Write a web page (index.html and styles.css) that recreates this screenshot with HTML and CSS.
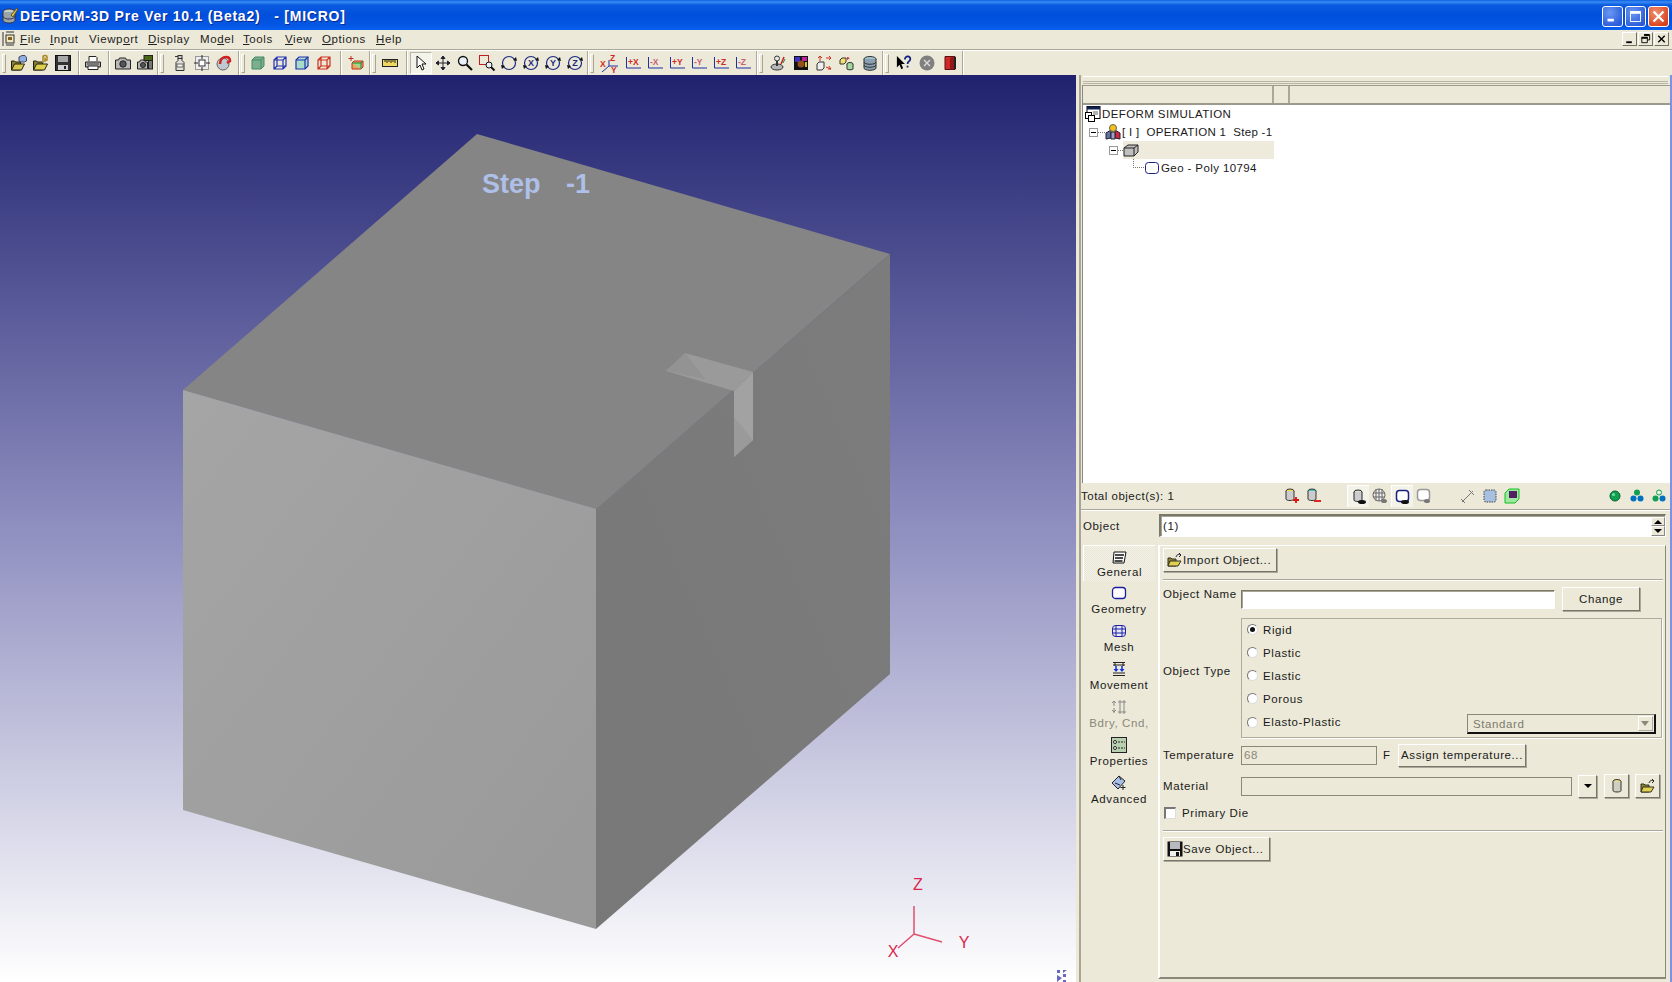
FILE: index.html
```html
<!DOCTYPE html>
<html lang="en">
<head>
<meta charset="utf-8">
<title>DEFORM-3D Pre</title>
<link rel="stylesheet" href="styles.css">
</head>
<body>
<div class="window">
  <header class="titlebar">
    <svg class="app-icon" viewBox="0 0 18 18"><ellipse cx="8" cy="5" rx="6" ry="3" fill="#c8ccc8" stroke="#334"/><path d="M2 5v8c0 2 3 3 6 3s6-1 6-3V5" fill="#9aa4a8" stroke="#334"/><path d="M2 9c0 2 3 3 6 3s6-1 6-3" fill="none" stroke="#334"/><path d="M10 8 16 1l1 1-5 8z" fill="#e8c040" stroke="#553"/></svg>
    <span class="title-text">DEFORM-3D Pre Ver 10.1 (Beta2) &nbsp; - [MICRO]</span>
    <div class="winbtns">
      <span class="winbtn"><svg viewBox="0 0 21 21"><rect x="5" y="13" width="7" height="3" fill="#fff"/></svg></span>
      <span class="winbtn"><svg viewBox="0 0 21 21"><rect x="5" y="5" width="11" height="11" fill="none" stroke="#fff"/><rect x="5" y="5" width="11" height="2.5" fill="#fff"/></svg></span>
      <span class="winbtn close"><svg viewBox="0 0 21 21"><path d="M5 5l11 11M16 5 5 16" stroke="#fff" stroke-width="2.4"/></svg></span>
    </div>
  </header>

  <nav class="menubar">
    <svg class="doc-icon" viewBox="0 0 14 16"><path d="M1 1v14" stroke="#333"/><rect x="4" y="4" width="8" height="8" fill="#f0e8c0" stroke="#333"/><rect x="6" y="6" width="4" height="3" fill="#806020"/><path d="M4 1h8M12 14H4" stroke="#333"/></svg>
    <span class="menu m-file"><u>F</u>ile</span>
    <span class="menu m-input"><u>I</u>nput</span>
    <span class="menu m-view"><span>Viewp</span><u>o</u>rt</span>
    <span class="menu m-disp"><u>D</u>isplay</span>
    <span class="menu m-model">Mo<u>d</u>el</span>
    <span class="menu m-tools"><u>T</u>ools</span>
    <span class="menu m-vw"><u>V</u>iew</span>
    <span class="menu m-opt"><u>O</u>ptions</span>
    <span class="menu m-help"><u>H</u>elp</span>
    <div class="mdibtns">
      <span class="mdibtn"><svg viewBox="0 0 13 13"><rect x="3" y="9" width="6" height="2" fill="#000"/></svg></span>
      <span class="mdibtn"><svg viewBox="0 0 13 13"><path d="M5 2.500h6v5H9M2.500 5.500h6v5h-6z" fill="none" stroke="#000"/><path d="M5 2h6M2 5h7" stroke="#000" stroke-width="2"/></svg></span>
      <span class="mdibtn"><svg viewBox="0 0 13 13"><path d="M3 3l7 7M10 3l-7 7" stroke="#000" stroke-width="1.500"/></svg></span>
    </div>
  </nav>

  <div class="toolbar">
    <div class="tgroup g1">
      <span class="grip"></span>
      <span class="tool"><svg viewBox="0 0 16 16"><path d="M0.500 15V6h3l1 1h5v8z" fill="#8a8030" stroke="#221"/><path d="M0.500 15l3-6h10l-3 6z" fill="#d8c850" stroke="#221"/><path d="M8 6V2l3-1.500h3l1.500 2V6l-2 1H10z" fill="#8cb0e0" stroke="#446"/></svg></span>
      <span class="tool"><svg viewBox="0 0 16 16"><path d="M0.500 15V6h3l1 1h5v8z" fill="#8a8030" stroke="#221"/><path d="M0.500 15l3-6h11l-3 6z" fill="#e0d050" stroke="#221"/><path d="M10 8V2c0-2 4-2 4 0v3l-2 1V2.500" fill="none" stroke="#a88820" stroke-width="1.500"/></svg></span>
      <span class="tool"><svg viewBox="0 0 16 16"><rect x="0.500" y="0.500" width="15" height="15" fill="#333" stroke="#111"/><rect x="3" y="1" width="10" height="6" fill="#a8a8a8"/><rect x="3" y="10" width="10" height="5" fill="#d0d0d0"/><rect x="9" y="11" width="2" height="3" fill="#222"/></svg></span>
    </div>
    <div class="tgroup g2">
      <span class="tool"><svg viewBox="0 0 16 16"><path d="M4 6V1.500h7l1 1V6" fill="#fff" stroke="#222"/><path d="M0.500 7h15v5H0.500z" fill="#b0b0b0" stroke="#222"/><path d="M3 11h10v3.500H3z" fill="#fff" stroke="#222"/><path d="M2 9h12" stroke="#444"/></svg></span>
    </div>
    <div class="tgroup g3">
      <span class="tool"><svg viewBox="0 0 16 16"><path d="M0.500 5h3l1-2h6l1 2h4v9H0.500z" fill="#b8b8b8" stroke="#222"/><circle cx="8" cy="9" r="3.200" fill="#555" stroke="#222"/></svg></span>
      <span class="tool"><svg viewBox="0 0 16 16"><path d="M0.500 7h2l1-2h4l1 2h2v7H0.500z" fill="#b8b8b8" stroke="#222"/><circle cx="6" cy="10" r="2.500" fill="#555" stroke="#222"/><rect x="7" y="0.500" width="8.500" height="5" fill="#486818" stroke="#222"/><rect x="11.500" y="5.500" width="4" height="8.500" fill="#777" stroke="#222"/></svg></span>
    </div>
    <div class="tgroup g4">
      <span class="grip m3"></span>
      <span class="tool"><svg viewBox="0 0 16 16"><rect x="6" y="0.500" width="4" height="3" fill="#ccc" stroke="#333"/><path d="M3 1.500h3M6 3.500h4v2l2 2v8H4v-8l2-2z" fill="#e0e0d8" stroke="#333"/><rect x="5" y="9" width="6" height="3" fill="#f8f8f0" stroke="#666"/></svg></span>
      <span class="tool"><svg viewBox="0 0 16 16"><rect x="1.500" y="1.500" width="13" height="13" fill="#eee" stroke="#999"/><rect x="5" y="5" width="6" height="6" fill="#fff" stroke="#333"/><path d="M8 0v4M8 12v4M0 8h4M12 8h4" stroke="#222"/></svg></span>
      <span class="tool"><svg viewBox="0 0 16 16"><circle cx="7" cy="9" r="6" fill="#c0c8d0" stroke="#666"/><path d="M4 9c0-5 3-7 6-7s4 2 4 4l-3 2" fill="none" stroke="#d02020" stroke-width="2.500"/></svg></span>
    </div>
    <div class="tgroup g5">
      <span class="grip"></span>
      <span class="tool"><svg viewBox="0 0 16 16"><path d="M2 5l3-3h9v9l-3 3H2z" fill="#7cb08c" stroke="#486"/><path d="M2 5h9v9M11 5l3-3" fill="none" stroke="#486"/></svg></span>
      <span class="tool"><svg viewBox="0 0 16 16"><path d="M2 5l3-3h9v9l-3 3H2zM2 5h9v9M11 5l3-3M5 2v9h9M5 11l-3 3" fill="none" stroke="#2030b0" stroke-width="1.200"/></svg></span>
      <span class="tool"><svg viewBox="0 0 16 16"><path d="M2 5l3-3h9v9l-3 3H2z" fill="#a8dcc8" stroke="#2030b0" stroke-width="1.200"/><path d="M2 5h9v9M11 5l3-3" fill="none" stroke="#2030b0" stroke-width="1.200"/></svg></span>
      <span class="tool"><svg viewBox="0 0 16 16"><path d="M2 5l3-3h9v9l-3 3H2zM2 5h9v9M11 5l3-3M5 2v9h9M5 11l-3 3" fill="none" stroke="#d03020" stroke-width="1.200"/></svg></span>
    </div>
    <div class="tgroup g6">
      <span class="tool"><svg viewBox="0 0 16 16"><path d="M4 8l2-2h9v6l-2 2H4z" fill="#e8a860" stroke="#c03020"/><path d="M4 8h9v6M13 8l2-2" fill="#a0d890" stroke="#208030"/><path d="M3 1v5M0.500 3.500h5" stroke="#c03020"/></svg></span>
    </div>
    <div class="tgroup g7">
      <span class="grip m1"></span>
      <span class="tool"><svg viewBox="0 0 16 16"><rect x="0.500" y="4.500" width="15" height="7" fill="#f0d860" stroke="#222"/><path d="M3 5v2M5 5v3M7 5v2M9 5v3M11 5v2M13 5v3" stroke="#222"/></svg></span>
    </div>
    <div class="tgroup g8">
      <span class="tool pressed"><svg viewBox="0 0 16 16"><path d="M4 1v12l3-3 2 5 2-1-2-5h4z" fill="#fff" stroke="#111"/></svg></span>
      <span class="tool"><svg viewBox="0 0 16 16"><path d="M8 1v14M1 8h14M8 1 6 3.500h4zM8 15l-2-2.500h4zM1 8l2.500-2v4zM15 8l-2.500-2v4z" fill="#223" stroke="#223"/></svg></span>
      <span class="tool"><svg viewBox="0 0 16 16"><circle cx="6" cy="6" r="4.500" fill="#e8f0f8" stroke="#111" stroke-width="1.300"/><path d="M9.500 9.500 15 15" stroke="#111" stroke-width="2.200"/></svg></span>
      <span class="tool"><svg viewBox="0 0 16 16"><rect x="0.500" y="0.500" width="9" height="9" fill="none" stroke="#c02020"/><circle cx="10" cy="10" r="3" fill="#e8f0f8" stroke="#111"/><path d="M12 12l3.500 3.500" stroke="#111" stroke-width="2"/></svg></span>
      <span class="tool"><svg viewBox="0 0 16 16"><circle cx="8" cy="8" r="6.500" fill="none" stroke="#1a2a80" stroke-width="1.200"/><path d="M16 6l-4-1 3-3zM0 10l4 1-3 3z" fill="#111"/></svg></span>
      <span class="tool"><svg viewBox="0 0 16 16"><circle cx="8" cy="8" r="6.500" fill="none" stroke="#1a2a80" stroke-width="1.200"/><path d="M16 6l-4-1 3-3zM0 10l4 1-3 3z" fill="#111"/><text class="rot" x="8" y="11" text-anchor="middle">X</text></svg></span>
      <span class="tool"><svg viewBox="0 0 16 16"><circle cx="8" cy="8" r="6.500" fill="none" stroke="#1a2a80" stroke-width="1.200"/><path d="M16 6l-4-1 3-3zM0 10l4 1-3 3z" fill="#111"/><text class="rot" x="8" y="11" text-anchor="middle">Y</text></svg></span>
      <span class="tool"><svg viewBox="0 0 16 16"><circle cx="8" cy="8" r="6.500" fill="none" stroke="#1a2a80" stroke-width="1.200"/><path d="M16 6l-4-1 3-3zM0 10l4 1-3 3z" fill="#111"/><text class="rot" x="8" y="11" text-anchor="middle">Z</text></svg></span>
    </div>
    <div class="tgroup g9">
      <span class="grip m1"></span>
      <span class="tool xyz"><svg viewBox="0 0 20 20"><path d="M9 7v6M9 13 2 19M9 13h9" stroke="#2030a0" fill="none"/><text class="ax red" x="10" y="8">Z</text><text class="ax red" x="0" y="14">X</text><text class="ax red" x="11" y="20">Y</text></svg></span>
      <span class="tool dir"><svg viewBox="0 0 16 16"><path d="M1.500 2v11H16" stroke="#2030a0" fill="none"/><text class="ax red" x="3" y="10">+X</text></svg></span>
      <span class="tool dir"><svg viewBox="0 0 16 16"><path d="M1.500 2v11H16" stroke="#2030a0" fill="none"/><text class="ax pale" x="3" y="10">-X</text></svg></span>
      <span class="tool dir"><svg viewBox="0 0 16 16"><path d="M1.500 2v11H16" stroke="#2030a0" fill="none"/><text class="ax red" x="3" y="10">+Y</text></svg></span>
      <span class="tool dir"><svg viewBox="0 0 16 16"><path d="M1.500 2v11H16" stroke="#2030a0" fill="none"/><text class="ax pale" x="3" y="10">-Y</text></svg></span>
      <span class="tool dir"><svg viewBox="0 0 16 16"><path d="M1.500 2v11H16" stroke="#2030a0" fill="none"/><text class="ax red" x="3" y="10">+Z</text></svg></span>
      <span class="tool dir"><svg viewBox="0 0 16 16"><path d="M1.500 2v11H16" stroke="#2030a0" fill="none"/><text class="ax pale" x="3" y="10">-Z</text></svg></span>
    </div>
    <div class="tgroup g10">
      <span class="grip m1"></span>
      <span class="tool w23"><svg viewBox="0 0 16 16"><ellipse cx="7" cy="12" rx="6" ry="3" fill="#b8b8b8" stroke="#333"/><path d="M7 11V5" stroke="#333" stroke-width="2"/><circle cx="7" cy="3.500" r="2.500" fill="#e8e8e8" stroke="#333"/><path d="M11 9l3-7" stroke="#c02020" stroke-width="1.500"/><path d="M13 8l2-4" stroke="#208030"/></svg></span>
      <span class="tool w23"><svg viewBox="0 0 16 16"><rect x="1" y="1" width="14" height="14" fill="#111"/><rect x="2" y="2" width="5" height="5" fill="#4030c0"/><rect x="9" y="2" width="5" height="4" fill="#c020a0"/><circle cx="8" cy="9" r="3.500" fill="#905020"/><rect x="12" y="7" width="2" height="5" fill="#d8c020"/></svg></span>
      <span class="tool w23"><svg viewBox="0 0 16 16"><path d="M1 9l2-2h5v6l-2 2H1z" fill="#eee" stroke="#333"/><path d="M4 6V1M2 3l2-2 2 2M10 3h5M13 1l2 2-2 2M10 12l5 2M13 11l2 3h-3" stroke="#d03020" fill="none"/></svg></span>
      <span class="tool w23"><svg viewBox="0 0 16 16"><path d="M1 5l2-2h4v4L5 9H1z" fill="#f0e070" stroke="#333"/><ellipse cx="11" cy="9" rx="3" ry="1.500" fill="#a0d8a0" stroke="#333"/><path d="M8 9v5c0 1 6 1 6 0V9" fill="#a0d8a0" stroke="#333"/><path d="M8 2l3 1-3 2" fill="#d03020"/></svg></span>
      <span class="tool w23"><svg viewBox="0 0 16 16"><ellipse cx="8" cy="4" rx="6" ry="2.500" fill="#a0c0d0" stroke="#333"/><path d="M2 4v9c0 3 12 3 12 0V4" fill="#88a0b0" stroke="#333"/><path d="M2 7c0 3 12 3 12 0M2 10c0 3 12 3 12 0" fill="none" stroke="#333"/></svg></span>
    </div>
    <div class="tgroup g11">
      <span class="grip m1"></span>
      <span class="tool w23"><svg viewBox="0 0 18 18"><path d="M1 1v13l3-3 2 5 2-1-2-5h4z" fill="#000"/><path d="M10 5c0-5 7-4 6 0 0 2-3 2-3 5M13 12v2" fill="none" stroke="#102080" stroke-width="2"/></svg></span>
      <span class="tool w23"><svg viewBox="0 0 16 16"><circle cx="8" cy="8" r="7.500" fill="#808080"/><path d="M5 5l6 6M11 5l-6 6" stroke="#ddd" stroke-width="1.300"/></svg></span>
      <span class="tool w23"><svg viewBox="0 0 16 16"><path d="M3 1.500h10v13H3z" fill="#d02828" stroke="#511"/><path d="M8 3l4-1.500v13H8" fill="#901818"/><path d="M13 2v12" stroke="#222" stroke-width="2"/></svg></span>
    </div>
  </div>

  <main class="workspace">
    <div class="viewport">
      <svg class="scene" viewBox="0 75 1076 907" xmlns="http://www.w3.org/2000/svg">
        <defs>
          <linearGradient id="bg" x1="0" y1="0" x2="0" y2="1">
            <stop offset="0" stop-color="#20226f"/>
            <stop offset="0.5" stop-color="#8f8fc0"/>
            <stop offset="1" stop-color="#ffffff"/>
          </linearGradient>
          <linearGradient id="lf" x1="0" y1="0" x2="1" y2="1">
            <stop offset="0" stop-color="#a5a5a5"/>
            <stop offset="1" stop-color="#999999"/>
          </linearGradient>
          <linearGradient id="rf" x1="0" y1="1" x2="1" y2="0">
            <stop offset="0" stop-color="#787878"/>
            <stop offset="1" stop-color="#7c7c7c"/>
          </linearGradient>
        </defs>
        <rect x="0" y="75" width="1076" height="907" fill="url(#bg)"/>
        <polygon points="477,134 890,254 596,509 183,390" fill="#858585"/>
        <polygon points="183,390 596,509 596,929 183,810" fill="url(#lf)"/>
        <polygon points="596,509 890,254 890,674 596,929" fill="url(#rf)"/>
        <polygon points="685,353 753,372 734,391 666,371" fill="#9a9a9a"/>
        <polygon points="685,353 705,379 666,371" fill="#939393"/>
        <polygon points="734,391 753,372 753,440 734,457" fill="#a2a2a2"/>
        <polygon points="734,417 753,440 734,457" fill="#9a9a9a"/>
        <text class="step" x="482" y="193">Step</text>
        <text class="step" x="566" y="193">-1</text>
        <g class="axes">
          <path d="M914 906V934M914 934 942 942M914 934 898 948"/>
        </g>
        <text class="axis" x="918" y="890" text-anchor="middle">Z</text>
        <text class="axis" x="964" y="948" text-anchor="middle">Y</text>
        <text class="axis" x="893" y="957" text-anchor="middle">X</text>
        <path d="M1057 970h3v3h-3zM1063 970h4l-4 3zM1057 975l5 3-5 4zM1063 974h3v3h-3zM1063 980h3v2h-3z" fill="#6868c0"/>
      </svg>
    </div>

    <aside class="side">
      <div class="sash-grip"></div>
      <div class="tree">
        <div class="tree-head">
          <span class="th th1"></span><span class="th th2"></span><span class="th th3"></span>
        </div>
        <div class="tree-body">
          <div class="row r1">
            <svg class="ticon" viewBox="0 0 16 16"><rect x="2" y="0.500" width="13" height="12" fill="#fff" stroke="#000"/><rect x="2" y="0.500" width="13" height="3" fill="#102050"/><rect x="0.500" y="6.500" width="6" height="6" fill="#fff" stroke="#000"/><rect x="3.500" y="9.500" width="6" height="6" fill="#fff" stroke="#000"/><path d="M8 6h5M8 8h5" stroke="#666"/></svg>
            <span class="tlabel">DEFORM SIMULATION</span>
          </div>
          <div class="row r2">
            <span class="exp"></span><span class="dot-h"></span>
            <svg class="ticon" viewBox="0 0 16 16"><path d="M1 9l5-3v8l-5 1z" fill="#6070a0" stroke="#223"/><path d="M15 9l-5-3v8l5 1z" fill="#d02840" stroke="#223"/><path d="M6 8h4v7H6z" fill="#a0a0c0" stroke="#223"/><circle cx="8" cy="4" r="3.500" fill="#f0c020" stroke="#664"/></svg>
            <span class="tlabel op">[ I ] &nbsp;OPERATION 1 &nbsp;Step -1</span>
          </div>
          <div class="row r3">
            <span class="exp"></span><span class="dot-h short"></span>
            <span class="sel">
              <svg class="ticon" viewBox="0 0 16 16"><path d="M1 6l4-3h10v7l-4 4H1z" fill="#c0c0c0" stroke="#222"/><path d="M1 6h10v8M11 6l4-3" fill="none" stroke="#222"/></svg>
            </span>
          </div>
          <div class="row r4">
            <span class="elbow"></span>
            <svg class="ticon" viewBox="0 0 16 16"><rect x="1.500" y="2.500" width="13" height="11" rx="3" fill="#fff" stroke="#1a2080"/></svg>
            <span class="tlabel">Geo - Poly 10794</span>
          </div>
        </div>
      </div>

      <div class="status">
        <span class="total">Total object(s): 1</span>
        <div class="sgroup s1">
          <span class="sicon"><svg viewBox="0 0 16 16"><ellipse cx="7" cy="3" rx="4" ry="2" fill="#f0e050" stroke="#333"/><path d="M3 3v8c0 2 8 2 8 0V3" fill="#ccc" stroke="#333"/><path d="M10 12h6M13 9v6" stroke="#e01010" stroke-width="1.800"/></svg></span>
          <span class="sicon"><svg viewBox="0 0 16 16"><ellipse cx="7" cy="3" rx="4" ry="2" fill="#40c8c8" stroke="#333"/><path d="M3 3v8c0 2 8 2 8 0V3" fill="#ccc" stroke="#333"/><path d="M9 13h7" stroke="#e01010" stroke-width="1.800"/></svg></span>
        </div>
        <div class="sgroup s2">
          <span class="sicon on"><svg viewBox="0 0 16 16"><ellipse cx="7" cy="3" rx="4" ry="2" fill="#ddd" stroke="#222"/><path d="M3 3v8c0 2 8 2 8 0V3" fill="#ccc" stroke="#222"/><ellipse cx="11" cy="13" rx="4" ry="2" fill="#111"/></svg></span>
          <span class="sicon"><svg viewBox="0 0 16 16"><circle cx="7" cy="7" r="6" fill="#eee" stroke="#666"/><path d="M1 5h12M1 9h12M4 1v12M7 1v12M10 1v12" stroke="#666"/><ellipse cx="12" cy="13" rx="3" ry="2" fill="#777"/></svg></span>
          <span class="sicon on"><svg viewBox="0 0 16 16"><rect x="1.500" y="1.500" width="12" height="11" rx="3" fill="#fff" stroke="#1a2080" stroke-width="1.500"/><ellipse cx="10" cy="13" rx="4" ry="2" fill="#111"/></svg></span>
          <span class="sicon"><svg viewBox="0 0 16 16"><rect x="1.500" y="1.500" width="12" height="11" rx="3" fill="#fff" stroke="#999" stroke-width="1.500"/><ellipse cx="11" cy="13" rx="3" ry="2" fill="#777"/></svg></span>
        </div>
        <div class="sgroup s3">
          <span class="sicon"><svg viewBox="0 0 16 16"><path d="M2 14 13 3M9 2l5 5M1 11l4 4" stroke="#777" fill="none"/></svg></span>
          <span class="sicon"><svg viewBox="0 0 16 16"><rect x="2" y="2" width="12" height="12" rx="2" fill="#a8c0e0" stroke="#444" stroke-dasharray="1.500 1"/></svg></span>
          <span class="sicon"><svg viewBox="0 0 16 16"><path d="M1 5l4-4h10v10l-4 4H1z" fill="#a0e8a0" stroke="#10c020"/><rect x="5" y="3" width="8" height="7" fill="#502060"/></svg></span>
        </div>
        <div class="sgroup s4">
          <span class="sicon"><svg viewBox="0 0 16 16"><circle cx="8" cy="8" r="5" fill="#10a050" stroke="#086030"/><circle cx="6.500" cy="6.500" r="1.500" fill="#70e0a0"/></svg></span>
          <span class="sicon"><svg viewBox="0 0 16 16"><circle cx="8" cy="4.500" r="3" fill="#10a050"/><circle cx="4.500" cy="10.500" r="3" fill="#0070c0"/><circle cx="11.500" cy="10.500" r="3" fill="#0070c0"/></svg></span>
          <span class="sicon"><svg viewBox="0 0 16 16"><circle cx="8" cy="4.500" r="2.500" fill="#e8f0e8" stroke="#10a050"/><circle cx="4.500" cy="10.500" r="3" fill="#10a050"/><circle cx="11.500" cy="10.500" r="3" fill="#0070c0"/></svg></span>
        </div>
      </div>

      <div class="objrow">
        <span class="objlabel">Object</span>
        <div class="objfield sunken">
          <span>(1)</span>
          <div class="spin"><span class="up"></span><span class="down"></span></div>
        </div>
      </div>

      <div class="editor">
        <div class="tabs">
          <div class="tab active">
            <svg viewBox="0 0 16 16"><path d="M2 2h12l-2 11H1z" fill="#fff" stroke="#111"/><path d="M3 5h9M3 8h8M2.500 11h8" stroke="#111" stroke-width="1.300"/></svg>
            <span>General</span>
          </div>
          <div class="tab">
            <svg viewBox="0 0 16 16"><rect x="1.500" y="2.500" width="13" height="11" rx="3" fill="#fff" stroke="#1a20a0" stroke-width="1.300"/></svg>
            <span>Geometry</span>
          </div>
          <div class="tab">
            <svg viewBox="0 0 16 16"><rect x="1.500" y="2.500" width="13" height="11" rx="3" fill="#e8e8f8" stroke="#1a20a0"/><path d="M1 6h14M1 10h14M5 2v12M11 2v12" stroke="#1a20a0"/></svg>
            <span>Mesh</span>
          </div>
          <div class="tab">
            <svg viewBox="0 0 16 16"><path d="M2 1.500h12M2 4h12M4 1v4M12 1v4M2 14.500h12M2 12h12" stroke="#222" fill="none"/><path d="M5 5v3M11 5v3" stroke="#1030e0" stroke-width="1.500"/><path d="M2.500 8h5L5 11zM8.500 8h5L11 11z" fill="#1030e0"/></svg>
            <span>Movement</span>
          </div>
          <div class="tab disabled">
            <svg viewBox="0 0 16 16"><path d="M7 3h8M7 13h8M9 1v14M13 1v14" stroke="#888" fill="none"/><path d="M3 2v5M3 9v5M1 4l2-2 2 2M1 11l2 2 2-2" stroke="#888" fill="none"/></svg>
            <span>Bdry, Cnd,</span>
          </div>
          <div class="tab">
            <svg viewBox="0 0 16 16"><rect x="0.500" y="0.500" width="15" height="15" fill="#b8d0b0" stroke="#222"/><circle cx="4" cy="5" r="1.500" fill="#fff" stroke="#222"/><circle cx="4" cy="11" r="1.500" fill="#fff" stroke="#222"/><path d="M7 5h7M7 11h7" stroke="#222" stroke-dasharray="2 1"/></svg>
            <span>Properties</span>
          </div>
          <div class="tab">
            <svg viewBox="0 0 16 16"><path d="M1 8 8 1l6 5-7 8z" fill="#a8c0e8" stroke="#222"/><path d="M8 1l2 4M4 8l5 2M12 10v5M9.500 12.500h5" stroke="#222"/></svg>
            <span>Advanced</span>
          </div>
        </div>

        <section class="panel">
          <div class="row-import">
            <button class="btn b-import"><svg class="bicon" viewBox="0 0 16 16"><path d="M1 14V6h3l1 1h4v7z" fill="#8a8030" stroke="#332"/><path d="M1 14l2-5h11l-3 5z" fill="#e0d050" stroke="#332"/><path d="M9 5c1-3 3-3 5-2M12 1l2 2-2 2" fill="none" stroke="#222"/></svg>Import Object...</button>
          </div>
          <hr class="rule r-a">
          <div class="row-name">
            <label class="flabel">Object Name</label>
            <div class="input name-input sunken"></div>
            <button class="btn b-change">Change</button>
          </div>
          <div class="row-type">
            <label class="flabel type-label">Object Type</label>
            <div class="group">
              <div class="radio"><span class="rb checked"></span>Rigid</div>
              <div class="radio"><span class="rb"></span>Plastic</div>
              <div class="radio"><span class="rb"></span>Elastic</div>
              <div class="radio"><span class="rb"></span>Porous</div>
              <div class="radio last"><span class="rb"></span>Elasto-Plastic
                <div class="select"><span>Standard</span><span class="sel-btn"></span></div>
              </div>
            </div>
          </div>
          <div class="row-temp">
            <label class="flabel">Temperature</label>
            <div class="input temp-input">68</div>
            <span class="unit">F</span>
            <button class="btn b-assign">Assign temperature...</button>
          </div>
          <div class="row-mat">
            <label class="flabel">Material</label>
            <div class="input mat-input"></div>
            <button class="btn b-arrow"><span class="caret"></span></button>
            <button class="btn b-sq"><svg viewBox="0 0 16 16"><ellipse cx="8" cy="3.500" rx="4" ry="2" fill="#f0e080" stroke="#333"/><path d="M4 3.500v9c0 2 8 2 8 0v-9" fill="#d0d0c0" stroke="#333"/></svg></button>
            <button class="btn b-sq b-sq2"><svg viewBox="0 0 16 16"><path d="M1 14V6h3l1 1h4v7z" fill="#8a8030" stroke="#332"/><path d="M1 14l2-5h11l-3 5z" fill="#e0d050" stroke="#332"/><path d="M9 5c1-3 3-3 5-2M12 1l2 2-2 2" fill="none" stroke="#222"/></svg></button>
          </div>
          <div class="row-primary">
            <span class="check"></span>Primary Die
          </div>
          <hr class="rule r-b">
          <div class="row-save">
            <button class="btn b-save"><svg class="bicon" viewBox="0 0 16 16"><rect x="0.500" y="0.500" width="15" height="15" fill="#111"/><rect x="3" y="1" width="10" height="7" fill="#b8b8c0"/><rect x="3" y="10" width="10" height="5" fill="#eee"/><rect x="9" y="11" width="3" height="4" fill="#111"/></svg>Save Object...</button>
          </div>
        </section>
      </div>
    </aside>
  </main>
</div>
</body>
</html>
```

FILE: styles.css
```css
* { box-sizing: border-box; }
html, body { margin: 0; padding: 0; }
body {
  width: 1672px;
  height: 982px;
  overflow: hidden;
  background: #ece9d8;
  font-family: "Liberation Sans", Arial, sans-serif;
  font-size: 11.500px;
  letter-spacing: 0.600px;
  color: #1a1a1a;
}
.window { display: flex; flex-direction: column; width: 1672px; height: 982px; }

/* title bar */
.titlebar {
  height: 30px;
  flex: none;
  display: flex;
  align-items: center;
  padding-left: 1px;
  padding-top: 2px;
  color: #fff;
  background: linear-gradient(#0a5fe0 0, #3a8cf4 2px, #0a5ae0 5px, #0050dc 50%, #0456e4 85%, #0a62f0 100%);
}
.app-icon { width: 18px; height: 18px; flex: none; }
.title-text {
  margin-left: 1px;
  font-size: 14px;
  font-weight: bold;
  letter-spacing: 0.750px;
  white-space: pre;
  text-shadow: 1px 1px 0 #0a2a90;
}
.winbtns { margin-left: auto; margin-right: 3px; display: flex; gap: 2px; }
.winbtn {
  width: 21px;
  height: 21px;
  border: 1px solid #fff;
  border-radius: 3px;
  background: radial-gradient(circle at 35% 30%, #6a98f4, #2a5ad8 80%);
}
.winbtn svg { display: block; width: 19px; height: 19px; }
.winbtn.close { background: radial-gradient(circle at 35% 30%, #f09070, #d8401c 80%); }

/* menu */
.menubar {
  height: 20px;
  flex: none;
  display: flex;
  align-items: center;
  padding-left: 2px;
  padding-bottom: 2px;
  border-bottom: 1px solid #aca899;
  background: #ece9d8;
}
.doc-icon { width: 14px; height: 16px; flex: none; }
.menu { white-space: nowrap; color: #222; font-size: 11.500px; }
.m-file { margin-left: 4px; width: 30px; }
.m-input { width: 39px; }
.m-view { width: 59px; }
.m-disp { width: 52px; }
.m-model { width: 43px; }
.m-tools { width: 42px; }
.m-vw { width: 37px; }
.m-opt { width: 54px; }
.mdibtns { margin-left: auto; margin-right: 3px; display: flex; gap: 1px; }
.mdibtn {
  width: 15px;
  height: 14px;
  border-right: 1px solid #716f64;
  border-bottom: 1px solid #716f64;
  border-top: 1px solid #fff;
  border-left: 1px solid #fff;
}
.mdibtn svg { display: block; width: 13px; height: 12px; }

/* toolbar */
.toolbar {
  height: 25px;
  flex: none;
  display: flex;
  align-items: stretch;
  border-top: 1px solid #fff;
  background: #ece9d8;
}
.tgroup {
  display: flex;
  align-items: center;
  flex: none;
  border-right: 1px solid #aca899;
  box-shadow: 1px 0 0 #fff;
}
.g1 { width: 79px; }
.g2 { width: 30px; padding-left: 3px; }
.g3 { width: 49px; padding-left: 3px; }
.g4 { width: 81px; }
.g5 { width: 102px; }
.g6 { width: 29px; padding-left: 4px; }
.g7 { width: 37px; }
.g8 { width: 181px; padding-left: 3px; }
.g9 { width: 169px; }
.g10 { width: 126px; }
.g11 { width: 80px; }
.grip {
  flex: none;
  width: 4px;
  height: 19px;
  margin-left: 2px;
  margin-right: 2px;
  border: 1px solid;
  border-color: #fff #a8a595 #a8a595 #fff;
}
.grip.m1 { margin-right: 3px; }
.grip.m3 { margin-right: 5px; }
.tool {
  flex: none;
  width: 22px;
  height: 22px;
  display: flex;
  align-items: center;
  justify-content: center;
}
.tool.w23 { width: 23px; }
.tool.xyz { width: 25px; }
.tool svg { width: 16px; height: 16px; display: block; overflow: visible; }
.tool.xyz svg { width: 20px; height: 20px; }
.tool.pressed {
  background: #f4f3ea;
  border: 1px solid;
  border-color: #b8b6a8 #fff #fff #b8b6a8;
}
.rot { font-size: 9px; font-weight: bold; letter-spacing: 0; fill: #1a2a80; }
.ax { font-size: 8.500px; font-weight: bold; letter-spacing: 0; }
.ax.red { fill: #d02820; }
.ax.pale { fill: #c86070; }

/* workspace */
.workspace { flex: 1; min-height: 0; display: flex; }
.viewport { width: 1076px; flex: none; }
.scene { display: block; width: 1076px; height: 907px; }
.side {
  flex: 1;
  min-width: 0;
  margin-left: 3px;
  border-left: 2px solid #a8a595;
  border-right: 2px solid #7a94e0;
  display: flex;
  flex-direction: column;
}
.sash-grip {
  height: 8px;
  flex: none;
  margin: 1px 2px 0 2px;
  border-top: 1px solid #fff;
  border-bottom: 3px double #b8b5a5;
}

/* tree */
.tree {
  margin-left: 1px;
  height: 398px;
  flex: none;
  display: flex;
  flex-direction: column;
  border-left: 1px solid #888;
  margin-top: 1px;
}
.tree-head {
  height: 20px;
  flex: none;
  display: flex;
  border-bottom: 2px solid #9c9a8c;
  border-top: 1px solid #9c9a8c;
  background: #ece9d8;
}
.th { border-right: 2px solid #aca899; }
.th1 { width: 191px; }
.th2 { width: 16px; }
.th3 { flex: 1; border-right: 0; }
.tree-body { flex: 1; background: #fff; font-size: 11.500px; }
.row { height: 18px; display: flex; align-items: center; white-space: pre; letter-spacing: 0.400px; }
.r1 { padding-left: 2px; }
.r2 { padding-left: 6px; }
.r3 { padding-left: 26px; }
.r4 { padding-left: 50px; height: 17px; }
.sel { width: 151px; height: 18px; flex: none; display: flex; align-items: center; background: #efebdc; }
.op { letter-spacing: 0.300px; }
.ticon { width: 16px; height: 16px; flex: none; margin-right: 1px; }
.exp {
  width: 9px;
  height: 9px;
  flex: none;
  border: 1px solid #999;
  background: linear-gradient(#000, #000) center / 5px 1px no-repeat #fff;
}
.dot-h { width: 7px; height: 1px; flex: none; border-top: 1px dotted #777; }
.dot-h.short { width: 5px; }
.elbow {
  width: 11px;
  height: 9px;
  flex: none;
  margin-top: -8px;
  border-left: 1px dotted #777;
  border-bottom: 1px dotted #777;
}

/* status */
.status {
  height: 27px;
  flex: none;
  display: flex;
  align-items: center;
  border-bottom: 1px solid #aca899;
  box-shadow: 0 1px 0 #fff;
}
.total { width: 199px; flex: none; letter-spacing: 0.500px; }
.sgroup { display: flex; flex: none; }
.sicon { width: 22px; height: 22px; flex: none; display: flex; align-items: center; justify-content: center; }
.sicon svg { width: 16px; height: 16px; display: block; }
.sicon.on { background: #f4f3ea; border-left: 1px solid #fff; border-top: 1px solid #fff; }
.s2 { margin-left: 23px; }
.s3 { margin-left: 22px; }
.s4 { margin-left: 81px; }

/* object row */
.objrow { display: flex; align-items: center; height: 23px; margin-top: 4px; flex: none; }
.objlabel { margin-left: 2px; width: 76px; flex: none; }
.sunken {
  border: 1px solid;
  border-color: #7a7868 #fff #fff #7a7868;
  box-shadow: inset 1px 1px 0 #a8a595;
}
.objfield {
  width: 507px;
  height: 23px;
  background: #fff;
  display: flex;
  align-items: center;
  justify-content: space-between;
  padding-left: 2px;
  border-width: 2px 1px 1px 2px;
}
.spin { width: 14px; height: 19px; display: flex; flex-direction: column; background: #ece9d8; }
.spin span { flex: 1; display: block; position: relative; border: 1px solid #fff; border-right-color: #888; border-bottom-color: #888; }
.spin .up::after, .spin .down::after {
  content: "";
  position: absolute;
  left: 2px;
  top: 2px;
  border-left: 4px solid transparent;
  border-right: 4px solid transparent;
}
.spin .up::after { border-bottom: 4px solid #000; }
.spin .down::after { border-top: 4px solid #000; }

/* editor */
.editor { flex: 1; min-height: 0; display: flex; margin-top: 8px; }
.tabs { width: 77px; flex: none; padding-left: 2px; }
.tab {
  width: 72px;
  height: 38px;
  display: flex;
  flex-direction: column;
  align-items: center;
  padding-top: 2px;
}
.tab svg { width: 16px; height: 16px; display: block; flex: none; }
.tab span { margin-top: 1px; line-height: 14px; }
.tab.active {
  height: 36px;
  margin-bottom: 2px;
  padding-top: 4px;
  border-top: 1px solid #fff;
  border-left: 1px solid #fff;
  background: repeating-conic-gradient(#f4f2e8 0 25%, #e9e6d6 0 50%) 0 0 / 2px 2px;
}
.tab.active span { margin-top: -1px; }
.tab.disabled { color: #8a887a; }
.panel {
  width: 508px;
  height: 434px;
  flex: none;
  padding-left: 3px;
  border: 1px solid;
  border-color: #fff #8a8878 #8a8878 #fff;
  border-bottom-width: 2px;
  border-left: 2px solid #fff;
}
.btn {
  font: inherit;
  letter-spacing: inherit;
  color: #1a1a1a;
  background: #ece9d8;
  border: 1px solid;
  border-color: #fff #77756a #77756a #fff;
  box-shadow: 1px 1px 0 #aca899;
  padding: 0;
  display: flex;
  align-items: center;
  justify-content: center;
  flex: none;
}
.bicon { width: 16px; height: 16px; flex: none; }
.row-import { height: 25px; margin-top: 2px; }
.b-import { width: 114px; height: 24px; justify-content: flex-start; padding-left: 3px; }
.rule { border: 0; border-top: 1px solid #aca899; border-bottom: 1px solid #fff; margin: 0; height: 2px; width: 500px; }
.r-a { margin-top: 6px; }
.row-name { display: flex; margin-top: 6px; height: 25px; }
.flabel { width: 78px; flex: none; }
.row-name .flabel { line-height: 14px; }
.name-input { width: 314px; height: 19px; margin-top: 3px; background: #fff; }
.b-change { width: 78px; height: 24px; margin-left: 7px; }
.row-type { display: flex; align-items: center; margin-top: 6px; }
.type-label { margin-top: -14px; }
.group {
  width: 421px;
  height: 120px;
  border: 1px solid #b0ad9c;
  box-shadow: 1px 1px 0 #fff;
  padding: 0 0 0 5px;
}
.radio { height: 23px; display: flex; align-items: center; position: relative; top: -1px; }
.radio.last { height: 24px; }
.rb {
  width: 11px;
  height: 11px;
  border-radius: 50%;
  background: #fff;
  border: 1px solid;
  border-color: #777 #ddd #ddd #777;
  margin-right: 5px;
  flex: none;
  display: flex;
  align-items: center;
  justify-content: center;
}
.rb.checked::after { content: ""; width: 5px; height: 5px; border-radius: 50%; background: #111; }
.select {
  position: absolute;
  right: 5px;
  top: 4px;
  width: 189px;
  height: 20px;
  display: flex;
  align-items: center;
  justify-content: space-between;
  padding-left: 5px;
  color: #7d7b6e;
  border: 1px solid;
  border-color: #8a8878 #111 #111 #8a8878;
  border-width: 1px 2px 2px 1px;
}
.sel-btn {
  width: 15px;
  height: 15px;
  position: relative;
  border: 1px solid;
  border-color: #fff #aaa #aaa #fff;
  margin-right: 1px;
}
.sel-btn::after {
  content: "";
  position: absolute;
  left: 2px;
  top: 4px;
  border-left: 4px solid transparent;
  border-right: 4px solid transparent;
  border-top: 5px solid #8a8878;
}
.input { border: 1px solid #8a8878; height: 19px; padding-left: 2px; line-height: 16px; }
.input.name-input { border: 1px solid; border-color: #7a7868 #fff #fff #7a7868; }
.row-temp { display: flex; align-items: center; height: 22px; margin-top: 6px; }
.temp-input { width: 136px; color: #8a887a; }
.unit { margin-left: 6px; width: 15px; }
.b-assign { width: 128px; height: 23px; }
.row-mat { display: flex; align-items: center; height: 24px; margin-top: 8px; }
.mat-input { width: 331px; }
.b-arrow { width: 19px; height: 23px; margin-left: 6px; }
.caret { border-left: 4px solid transparent; border-right: 4px solid transparent; border-top: 4px solid #000; }
.b-sq { width: 25px; height: 24px; margin-left: 7px; }
.b-sq2 { margin-left: 6px; }
.b-sq svg { width: 16px; height: 16px; }
.row-primary { display: flex; align-items: center; height: 14px; margin-top: 8px; }
.check {
  width: 12px;
  height: 12px;
  margin: 0 6px 0 1px;
  background: #fff;
  border: 1px solid;
  border-color: #777 #ddd #ddd #777;
  border-width: 2px 1px 1px 2px;
  flex: none;
}
.r-b { margin-top: 10px; }
.row-save { margin-top: 5px; }
.b-save { width: 107px; height: 24px; justify-content: flex-start; padding-left: 3px; }

/* 3d scene text */
.step { font-family: "Liberation Sans", Arial, sans-serif; font-size: 27px; font-weight: bold; letter-spacing: 0; fill: #aebfe8; }
.axes path { stroke: #e0506e; stroke-width: 1.500; fill: none; }
.axis { font-family: "Liberation Sans", Arial, sans-serif; font-size: 16px; letter-spacing: 0; fill: #d82850; }
```
